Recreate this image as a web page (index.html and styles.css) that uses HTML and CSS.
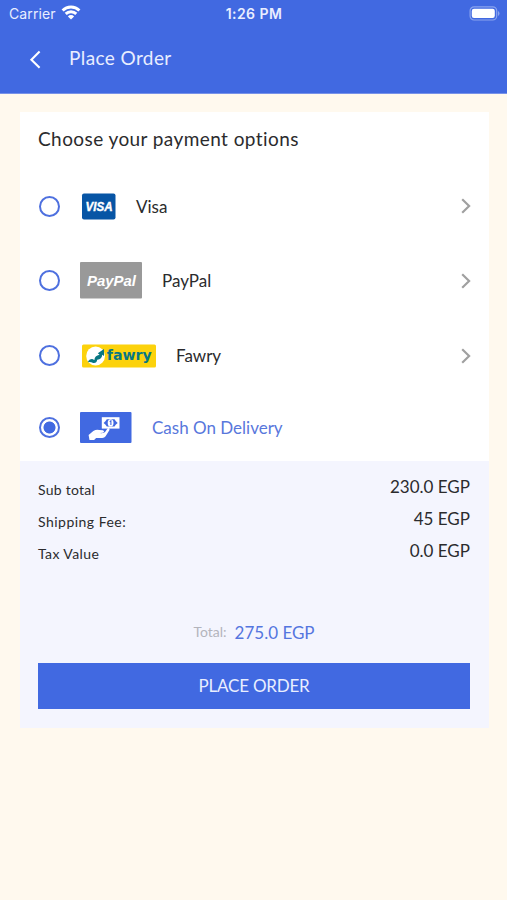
FILE: index.html
```html
<!DOCTYPE html>
<html lang="en">
<head>
<meta charset="utf-8">
<title>Place Order</title>
<link rel="stylesheet" href="styles.css">
</head>
<body>
<header class="header">
  <div class="status">
    <div class="carrier"><span>Carrier</span>
      <svg width="20" height="15" viewBox="0 0 20 15" fill="none" stroke="#fff" stroke-width="2.9"><path d="M1.6 5.5a12 12 0 0 1 16.8 0M4.7 8.9a7.6 7.6 0 0 1 10.6 0"/><path d="M10 14.5 6.9 11.4a4.3 4.3 0 0 1 6.2 0z" fill="#fff" stroke="none"/></svg>
    </div>
    <div class="clock">1:26 PM</div>
    <svg class="battery" width="31" height="15" viewBox="0 0 31 15"><rect x="1.1" y=".8" width="26.6" height="13.2" rx="4" fill="none" stroke="#8ba4ee" stroke-width="1.2"/><rect x="2.8" y="2.8" width="23" height="9.2" rx="2.2" fill="#fff"/><path d="M29 5v5q1.5-.8 1.5-2.5T29 5z" fill="#8ba4ee"/></svg>
  </div>
  <nav class="nav">
    <svg width="12" height="20" viewBox="0 0 12 20" fill="none" stroke="#fff" stroke-width="2.1"><path d="M10.6 1.6 2.4 9.7l8.2 8.1"/></svg>
    <h1>Place Order</h1>
  </nav>
</header>
<main class="card">
  <h2>Choose your payment options</h2>
  <ul class="options">
    <li class="option first">
      <span class="radio"></span>
      <svg class="logo visa" width="34" height="27" viewBox="0 0 34 27"><rect width="33.5" height="26" y=".5" rx="2" fill="#0755a5"/><text x="3.5" y="18" textLength="27" lengthAdjust="spacingAndGlyphs" class="visa-text">VISA</text></svg>
      <span class="name">Visa</span>
      <svg class="chevron" width="10" height="16" viewBox="0 0 10 16"><path d="m1.2 1.3 6.9 6.7-6.9 6.7"/></svg>
    </li>
    <li class="option">
      <span class="radio"></span>
      <svg class="logo wide" width="62" height="37" viewBox="0 0 62 37"><rect width="62" height="36.5" rx="1" fill="#999"/><text x="7" y="23.5" textLength="49" lengthAdjust="spacingAndGlyphs" class="paypal-text">PayPal</text></svg>
      <span class="name">PayPal</span>
      <svg class="chevron" width="10" height="16" viewBox="0 0 10 16"><path d="m1.2 1.3 6.9 6.7-6.9 6.7"/></svg>
    </li>
    <li class="option">
      <span class="radio"></span>
      <svg class="logo" width="74" height="24" viewBox="0 0 74 24"><rect y=".5" width="74" height="23" rx="1.5" fill="#fcd20c"/><circle cx="13.6" cy="12" r="9.4" fill="#fff"/><path d="M5.8 18.2q1.4-3.3 4.4-3.2l2.2 1q.2-4.2 5.2-5.2l-1.8-1.5 6.2-4.4v7l-1.8-1.2q-.2 4.4-5 5-.6 3.7-4 3.2-2.6-1.2-5.4-.7z" fill="#087783"/><text x="24.8" y="16" textLength="45" lengthAdjust="spacingAndGlyphs" class="fawry-text">fawry</text></svg>
      <span class="name">Fawry</span>
      <svg class="chevron" width="10" height="16" viewBox="0 0 10 16"><path d="m1.2 1.3 6.9 6.7-6.9 6.7"/></svg>
    </li>
    <li class="option selected">
      <span class="radio"></span>
      <svg class="logo wide" width="52" height="31" viewBox="0 0 52 31"><rect width="51.5" height="31" rx="1" fill="#4169e1"/><rect x="21.8" y="5.2" width="17.7" height="11.4" fill="#fff"/><path d="M26.8 7.3q-.8 1.7-3.2 3.6 2.4 1.9 3.2 3.6h7.7q.8-1.7 3.2-3.6-2.4-1.9-3.2-3.6z" fill="#4169e1"/><ellipse cx="30.6" cy="10.9" rx="2.9" ry="3.6" fill="#fff"/><path d="m29.7 9.6 1.2-.8v4.3" fill="none" stroke="#4169e1" stroke-width="1.1"/><path d="m8.6 23 4.7-3.9q3-2 6-1.1l3.5.2q1.8.3 1.1 1.9-.5.9-4 1 4.6.4 5.4-1.4l2-2.9q1.1-1.2 2-.4.6.8-.1 2.1l-3.6 5.8q-1.2 1.6-3.3 1.6h-6.2l-2 2.2H9.5z" fill="#fff"/></svg>
      <span class="name">Cash On Delivery</span>
    </li>
  </ul>
  <section class="summary">
    <dl>
      <div class="line"><dt>Sub total</dt><dd>230.0 EGP</dd></div>
      <div class="line"><dt class="l-ship">Shipping Fee:</dt><dd>45 EGP</dd></div>
      <div class="line"><dt class="l-tax">Tax Value</dt><dd>0.0 EGP</dd></div>
    </dl>
    <div class="total"><span class="total-label">Total:</span><span class="total-value">275.0 EGP</span></div>
    <button class="place" type="button">PLACE ORDER</button>
  </section>
</main>
</body>
</html>
```
FILE: styles.css
```css
* { box-sizing: border-box; margin: 0; padding: 0; }
body { background: #fff9ee; font-family: Lato, sans-serif; color: #2b2b2d; min-height: 900px; }
svg { display: block; flex: none; overflow: visible; }
span, h1, h2, dt, dd { white-space: nowrap; }
.header { height: 94px; background: #4169e1; border-bottom: 1px solid #7892e8; color: #e9eeff; }
.status { height: 27px; padding: 0 7px 0 9px; display: grid; grid-template-columns: 1fr auto 1fr; align-items: center; font-family: Inter, sans-serif; }
.carrier { display: flex; align-items: center; gap: 5px; font-size: 14px; letter-spacing: 0.1px; }
.carrier svg { margin-top: -2px; }
.clock { font-size: 14px; font-weight: 600; letter-spacing: 0.45px; margin-right: 1px; }
.battery { justify-self: end; }
.nav { height: 65px; display: flex; align-items: center; gap: 28px; padding-left: 29px; }
.nav h1 { font-size: 19px; font-weight: 400; letter-spacing: 0.4px; margin-top: -4px; }
.card { width: 469px; height: 616px; margin: 18px 0 0 20px; background: #fff; display: flex; flex-direction: column; }
.card h2 { height: 57px; padding-left: 18px; font-size: 19px; line-height: 54px; font-weight: 400; letter-spacing: 0.42px; }
.options { list-style: none; }
.option { height: 75px; display: flex; align-items: center; padding: 0 18px 0 19px; }
.option.first { height: 74px; }
.option.selected { height: 68px; }
.radio { width: 21px; height: 21px; border: 2px solid #4e70df; border-radius: 50%; flex: none; }
.selected .radio { background: radial-gradient(circle, #4169e1 5.6px, #fff 6.4px); }
.logo { margin-left: 22px; }
.logo.wide { margin-left: 20px; }
.visa-text { font: italic 700 13px "Liberation Sans", sans-serif; fill: #fff; stroke: #fff; stroke-width: 0.4px; }
.paypal-text { font: italic 700 15px "Liberation Sans", sans-serif; fill: #fff; }
.fawry-text { font: 700 14px "DejaVu Sans", sans-serif; fill: #087783; }
.name { margin-left: 20px; font-size: 17px; }
.selected .name { color: #5877dc; }
.chevron { margin-left: auto; fill: none; stroke: #a0a0a0; stroke-width: 2.2; }
.summary { flex: 1; background: #f4f5fe; padding: 10px 19px 19px 18px; display: flex; flex-direction: column; }
.line { height: 32px; display: flex; justify-content: space-between; line-height: 32px; }
dt { font-size: 14px; padding-top: 3px; letter-spacing: 0.25px; }
.l-ship { letter-spacing: 0.48px; }
.l-tax { letter-spacing: 0.4px; }
dd { font-size: 17px; }
.total { margin-top: 50px; height: 32px; display: flex; justify-content: center; gap: 8px; line-height: 32px; color: #5475df; }
.total-label { font-size: 14px; color: #b3b4bc; margin-top: -1px; }
.total-value { font-size: 17px; }
.place { margin-top: 14px; height: 46px; width: 432px; border: 0; background: #4169e1; color: #e9eeff; font: 17px/46px Lato, sans-serif; letter-spacing: -0.2px; }
```
